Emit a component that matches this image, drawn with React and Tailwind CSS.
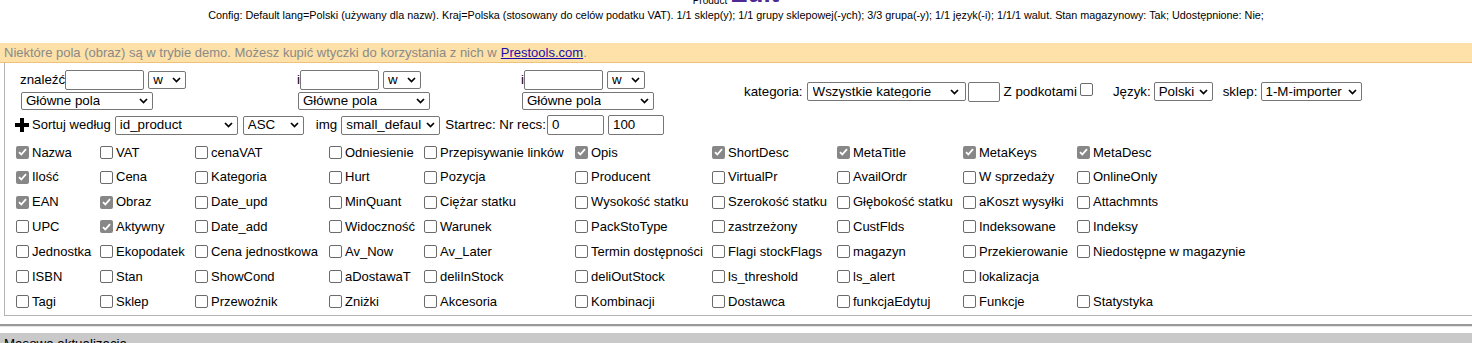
import React from "react";

// field checkboxes, 7 rows x 10 columns (null = empty cell)
const FIELDS = [
  [["Nazwa", 1], ["VAT"], ["cenaVAT"], ["Odniesienie"], ["Przepisywanie linków"], ["Opis", 1], ["ShortDesc", 1], ["MetaTitle", 1], ["MetaKeys", 1], ["MetaDesc", 1]],
  [["Ilość", 1], ["Cena"], ["Kategoria"], ["Hurt"], ["Pozycja"], ["Producent"], ["VirtualPr"], ["AvailOrdr"], ["W sprzedaży"], ["OnlineOnly"]],
  [["EAN", 1], ["Obraz", 1], ["Date_upd"], ["MinQuant"], ["Ciężar statku"], ["Wysokość statku"], ["Szerokość statku"], ["Głębokość statku"], ["aKoszt wysyłki"], ["Attachmnts"]],
  [["UPC"], ["Aktywny", 1], ["Date_add"], ["Widoczność"], ["Warunek"], ["PackStoType"], ["zastrzeżony"], ["CustFlds"], ["Indeksowane"], ["Indeksy"]],
  [["Jednostka"], ["Ekopodatek"], ["Cena jednostkowa"], ["Av_Now"], ["Av_Later"], ["Termin dostępności"], ["Flagi stockFlags"], ["magazyn"], ["Przekierowanie"], ["Niedostępne w magazynie"]],
  [["ISBN"], ["Stan"], ["ShowCond"], ["aDostawaT"], ["deliInStock"], ["deliOutStock"], ["ls_threshold"], ["ls_alert"], ["lokalizacja"], null],
  [["Tagi"], ["Sklep"], ["Przewoźnik"], ["Zniżki"], ["Akcesoria"], ["Kombinacji"], ["Dostawca"], ["funkcjaEdytuj"], ["Funkcje"], ["Statystyka"]],
];

const Chevron = () => (
  <svg width="9" height="6" viewBox="0 0 9 6" className="shrink-0">
    <path d="M1 1l3.5 3.5L8 1" fill="none" stroke="#000" strokeWidth="1.7" />
  </svg>
);

const Select = ({ value, className }) => (
  <div
    className={
      "flex items-center justify-between border border-[#767676] rounded-[2px] bg-white pl-[4px] pr-[4px] text-[13.33px] leading-none " +
      className
    }
  >
    <span className="whitespace-nowrap overflow-hidden">{value}</span>
    <Chevron />
  </div>
);

const Input = ({ value, className }) => (
  <div
    className={
      "flex items-center border border-[#767676] rounded-[2px] bg-white pl-[3px] text-[13.33px] leading-none " +
      className
    }
  >
    {value}
  </div>
);

const Check = ({ checked }) =>
  checked ? (
    <span className="inline-flex shrink-0 w-[13px] h-[13px] rounded-[2px] bg-[#878787] items-center justify-center">
      <svg width="9" height="8" viewBox="0 0 9 8">
        <path d="M1 4.2l2.3 2.3L8 1.2" fill="none" stroke="#fff" strokeWidth="1.8" />
      </svg>
    </span>
  ) : (
    <span className="inline-block shrink-0 w-[13px] h-[13px] rounded-[2px] border border-[#6b6b6b] bg-white" />
  );

const SearchCell = ({ label, className }) => (
  <div className={"flex flex-col gap-[2px] " + className}>
    <div className="flex items-center">
      <span className="text-[13.33px]">{label}</span>
      <Input className="w-[79px] h-[20px]" />
      <Select value="w" className="w-[38px] h-[18px] ml-[4px]" />
    </div>
    <Select value="Główne pola" className="w-[132px] h-[18px] ml-[1px]" />
  </div>
);

export default function App() {
  return (
    <div className="w-[1472px] h-[343px] overflow-hidden bg-white text-black font-['Liberation_Sans',Arial,sans-serif]">
      {/* page title, top cut off */}
      <div className="h-[6px] flex items-end justify-center overflow-hidden">
        <span className="text-[10px] leading-none mr-[3px]">Product</span>
        <span className="text-[26px] font-bold leading-none text-[#4c2a91]">Edit</span>
      </div>
      <div className="text-center text-[10.8px] leading-[14px] mt-[2px]">
        Config: Default lang=Polski (używany dla nazw). Kraj=Polska (stosowany do celów podatku VAT). 1/1 sklep(y); 1/1 grupy sklepowej(-ych); 3/3 grupa(-y); 1/1 język(-i); 1/1/1 walut. Stan magazynowy: Tak; Udostępnione: Nie;
      </div>

      {/* demo notice */}
      <div className="mt-[21px] h-[20px] bg-[#fde1a8] border-b border-[#efc27c] pl-[4px] flex items-center text-[13px] text-[#8a8a8a]">
        Niektóre pola (obraz) są w trybie demo. Możesz kupić wtyczki do korzystania z nich w
        <span className="ml-[4px] text-[#1a0dab] underline">Prestools.com</span>.
      </div>

      {/* search + field selection */}
      <div className="ml-[4px] border-l border-b border-[#b5b5b5] pt-[7px] pb-[1px]">
        <div className="flex items-center">
          <SearchCell label="znaleźć" className="ml-[15px] w-[277px]" />
          <SearchCell label="i" className="w-[224px]" />
          <SearchCell label="i" className="w-[224px]" />
          <div className="flex items-center text-[13.33px] ml-[-1px] mt-[3px]">
            <span className="mr-[4px]">kategoria:</span>
            <Select value="Wszystkie kategorie" className="w-[159px] h-[19px] pr-[6px] pl-[5px]" />
            <Input className="w-[32px] h-[20px] ml-[2px]" />
            <span className="ml-[4px]">Z podkotami</span>
            <span className="ml-[3px]"><Check /></span>
            <span className="ml-[20px] mr-[3px]">Język:</span>
            <Select value="Polski" className="w-[59px] h-[19px]" />
            <span className="ml-[10px] mr-[3px]">sklep:</span>
            <Select value="1-M-importer" className="w-[101px] h-[19px]" />
          </div>
        </div>

        <div className="flex items-center mt-[5px] ml-[10px] text-[13.33px]">
          <svg width="14" height="14" viewBox="0 0 14 14" className="mr-[3px]">
            <path d="M5 0h4v5h5v4H9v5H5V9H0V5h5z" fill="#000" />
          </svg>
          <span className="mr-[4px] text-[13px]">Sortuj według</span>
          <Select value="id_product" className="w-[123px] h-[19px]" />
          <Select value="ASC" className="w-[61px] h-[19px] ml-[5px]" />
          <span className="ml-[12px] mr-[4px]">img</span>
          <Select value="small_defaul" className="w-[99px] h-[19px] pr-[2px]" />
          <span className="ml-[5px] mr-[1px]">Startrec: Nr recs:</span>
          <Input value="0" className="w-[57px] h-[20px] pl-[4px]" />
          <Input value="100" className="w-[56px] h-[20px] ml-[4px] pl-[4px]" />
        </div>

        <div className="grid grid-cols-[84px_95px_134px_95px_151px_137px_125px_126px_114px_1fr] ml-[11px] mt-[5px] text-[13px]">
          {FIELDS.flat().map((f, i) =>
            f ? (
              <div key={i} className="h-[24.84px] flex items-center gap-[3px] whitespace-nowrap">
                <Check checked={!!f[1]} />
                <span>{f[0]}</span>
              </div>
            ) : (
              <div key={i} className="h-[24.84px]" />
            )
          )}
        </div>
      </div>

      <div className="mt-[8px] border-t-2 border-t-[#9a9a9a] border-b border-b-[#e4e4e4] h-[0px]" />
      <div className="mt-[6px] h-[20px] bg-[#c9c9c9] pl-[4px] text-[13.33px] leading-[18px] pt-[2px]">
        Masowa aktualizacja
      </div>
    </div>
  );
}
